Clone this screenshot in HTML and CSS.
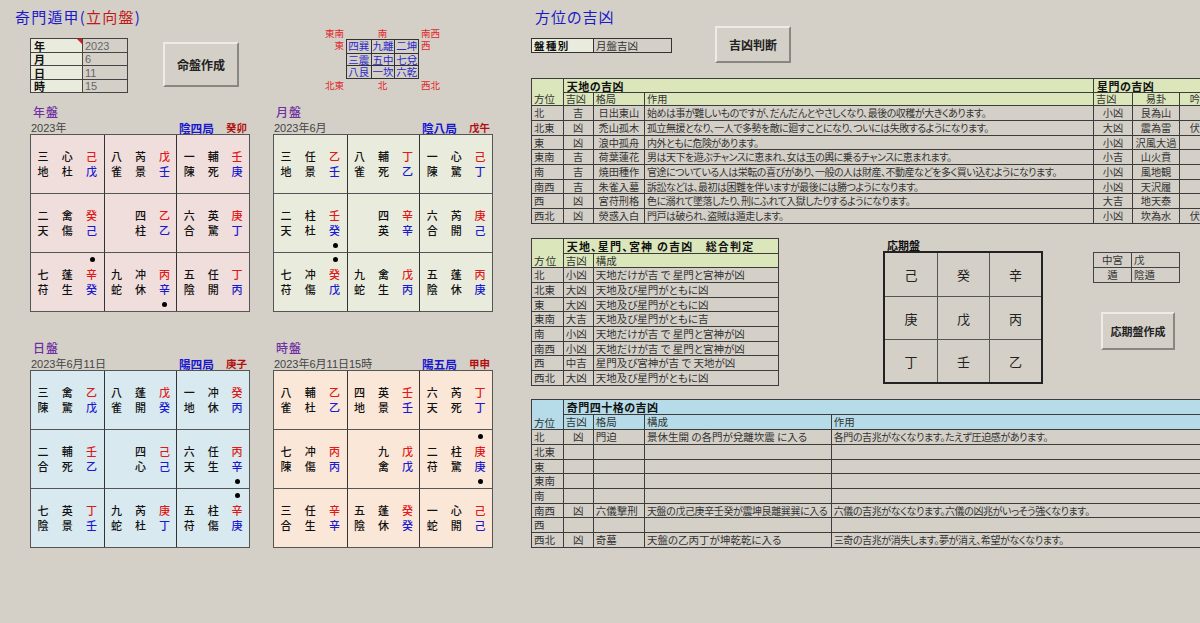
FILE: index.html
```html
<!DOCTYPE html>
<html lang="ja">
<head>
  <meta charset="UTF-8">
  <title>奇門遁甲(立向盤)</title>
  <link rel="stylesheet" href="styles.css">
</head>
<body>
<div class="page">

  <!-- left side: input and the four boards -->
  <div class="left">
    <div class="left-top">
      <div class="head">
        <h1 class="title">奇門遁甲(<span class="red">立向盤</span>)</h1>
        <div class="controls">
          <table class="input">
            <tr><th class="marked">年</th><td>2023</td></tr>
            <tr><th>月</th><td>6</td></tr>
            <tr><th>日</th><td>11</td></tr>
            <tr><th>時</th><td>15</td></tr>
          </table>
          <button class="btn btn-make">命盤作成</button>
        </div>
      </div>
      <div class="compass">
        <span class="dir dir-r">東南</span><span class="dir dir-c">南</span><span class="dir dir-l">南西</span>
        <span class="dir dir-r">東</span>
        <div class="palace">
          <span>四巽</span><span>九離</span><span>二坤</span>
          <span>三震</span><span>五中</span><span>七兌</span>
          <span>八艮</span><span>一坎</span><span>六乾</span>
        </div>
        <span class="dir dir-l">西</span>
        <span class="dir dir-r">北東</span><span class="dir dir-c">北</span><span class="dir dir-l">西北</span>
      </div>
    </div>

    <div class="boards">
      <section class="chart chart-year">
        <h2>年盤</h2>
        <div class="sub"><span>2023年</span><b class="ju">陰四局</b><b class="kan">癸卯</b></div>
        <div class="board">
          <div class="cell"><span>三</span><span>心</span><span class="r">己</span><span>地</span><span>杜</span><span class="b">戊</span></div>
          <div class="cell"><span>八</span><span>芮</span><span class="r">戊</span><span>雀</span><span>景</span><span class="b">壬</span></div>
          <div class="cell"><span>一</span><span>輔</span><span class="r">壬</span><span>陳</span><span>死</span><span class="b">庚</span></div>
          <div class="cell"><span>二</span><span>禽</span><span class="r">癸</span><span>天</span><span>傷</span><span class="b">己</span></div>
          <div class="cell"><span></span><span>四</span><span class="r">乙</span><span></span><span>柱</span><span class="b">乙</span></div>
          <div class="cell"><span>六</span><span>英</span><span class="r">庚</span><span>合</span><span>驚</span><span class="b">丁</span></div>
          <div class="cell"><i class="dot dot-top"></i><span>七</span><span>蓬</span><span class="r">辛</span><span>苻</span><span>生</span><span class="b">癸</span></div>
          <div class="cell"><span>九</span><span>冲</span><span class="r">丙</span><span>蛇</span><span>休</span><span class="b">辛</span><i class="dot dot-bottom"></i></div>
          <div class="cell"><span>五</span><span>任</span><span class="r">丁</span><span>陰</span><span>開</span><span class="b">丙</span></div>
        </div>
      </section>

      <section class="chart chart-month">
        <h2>月盤</h2>
        <div class="sub"><span>2023年6月</span><b class="ju">陰八局</b><b class="kan">戊午</b></div>
        <div class="board">
          <div class="cell"><span>三</span><span>任</span><span class="r">乙</span><span>地</span><span>景</span><span class="b">壬</span></div>
          <div class="cell"><span>八</span><span>輔</span><span class="r">丁</span><span>雀</span><span>死</span><span class="b">乙</span></div>
          <div class="cell"><span>一</span><span>心</span><span class="r">己</span><span>陳</span><span>驚</span><span class="b">丁</span></div>
          <div class="cell"><span>二</span><span>柱</span><span class="r">壬</span><span>天</span><span>杜</span><span class="b">癸</span><i class="dot dot-bottom"></i></div>
          <div class="cell"><span></span><span>四</span><span class="r">辛</span><span></span><span>英</span><span class="b">辛</span></div>
          <div class="cell"><span>六</span><span>芮</span><span class="r">庚</span><span>合</span><span>開</span><span class="b">己</span></div>
          <div class="cell"><i class="dot dot-top"></i><span>七</span><span>冲</span><span class="r">癸</span><span>苻</span><span>傷</span><span class="b">戊</span></div>
          <div class="cell"><span>九</span><span>禽</span><span class="r">戊</span><span>蛇</span><span>生</span><span class="b">丙</span></div>
          <div class="cell"><span>五</span><span>蓬</span><span class="r">丙</span><span>陰</span><span>休</span><span class="b">庚</span></div>
        </div>
      </section>

      <section class="chart chart-day">
        <h2>日盤</h2>
        <div class="sub"><span>2023年6月11日</span><b class="ju">陽四局</b><b class="kan">庚子</b></div>
        <div class="board">
          <div class="cell"><span>三</span><span>禽</span><span class="r">乙</span><span>陳</span><span>驚</span><span class="b">戊</span></div>
          <div class="cell"><span>八</span><span>蓬</span><span class="r">戊</span><span>雀</span><span>開</span><span class="b">癸</span></div>
          <div class="cell"><span>一</span><span>冲</span><span class="r">癸</span><span>地</span><span>休</span><span class="b">丙</span></div>
          <div class="cell"><span>二</span><span>輔</span><span class="r">壬</span><span>合</span><span>死</span><span class="b">乙</span></div>
          <div class="cell"><span></span><span>四</span><span class="r">己</span><span></span><span>心</span><span class="b">己</span></div>
          <div class="cell"><span>六</span><span>任</span><span class="r">丙</span><span>天</span><span>生</span><span class="b">辛</span><i class="dot dot-bottom"></i></div>
          <div class="cell"><span>七</span><span>英</span><span class="r">丁</span><span>陰</span><span>景</span><span class="b">壬</span></div>
          <div class="cell"><span>九</span><span>芮</span><span class="r">庚</span><span>蛇</span><span>杜</span><span class="b">丁</span></div>
          <div class="cell"><i class="dot dot-top"></i><span>五</span><span>柱</span><span class="r">辛</span><span>苻</span><span>傷</span><span class="b">庚</span></div>
        </div>
      </section>

      <section class="chart chart-hour">
        <h2>時盤</h2>
        <div class="sub"><span>2023年6月11日15時</span><b class="ju">陽五局</b><b class="kan">甲申</b></div>
        <div class="board">
          <div class="cell"><span>八</span><span>輔</span><span class="r">乙</span><span>雀</span><span>杜</span><span class="b">乙</span></div>
          <div class="cell"><span>四</span><span>英</span><span class="r">壬</span><span>地</span><span>景</span><span class="b">壬</span></div>
          <div class="cell"><span>六</span><span>芮</span><span class="r">丁</span><span>天</span><span>死</span><span class="b">丁</span></div>
          <div class="cell"><span>七</span><span>冲</span><span class="r">丙</span><span>陳</span><span>傷</span><span class="b">丙</span></div>
          <div class="cell"><span></span><span>九</span><span class="r">戊</span><span></span><span>禽</span><span class="b">戊</span></div>
          <div class="cell"><i class="dot dot-top"></i><span>二</span><span>柱</span><span class="r">庚</span><span>苻</span><span>驚</span><span class="b">庚</span><i class="dot dot-bottom"></i></div>
          <div class="cell"><span>三</span><span>任</span><span class="r">辛</span><span>合</span><span>生</span><span class="b">辛</span></div>
          <div class="cell"><span>五</span><span>蓬</span><span class="r">癸</span><span>陰</span><span>休</span><span class="b">癸</span></div>
          <div class="cell"><span>一</span><span>心</span><span class="r">己</span><span>蛇</span><span>開</span><span class="b">己</span></div>
        </div>
      </section>
    </div>
  </div>

  <!-- right side: direction tables -->
  <div class="right">
    <div class="right-top">
      <div class="right-head">
        <h1 class="title title-right">方位の吉凶</h1>
        <table class="kind">
          <tr><th>盤種別</th><td>月盤吉凶</td></tr>
        </table>
      </div>
      <button class="btn btn-judge">吉凶判断</button>
    </div>

    <table class="sheet sheet-a">
      <colgroup><col class="c-dir"><col class="c-luck"><col class="c-name"><col class="c-effect"><col class="c-luck2"><col class="c-gua"><col class="c-gin"></colgroup>
      <tr class="hd1"><th rowspan="2" class="dir-head">方位</th><th colspan="3">天地の吉凶</th><th colspan="3">星門の吉凶</th></tr>
      <tr class="hd2"><td>吉凶</td><td>格局</td><td>作用</td><td>吉凶</td><td class="ctr">易卦</td><td class="ctr">吟剋</td></tr>
      <tr><td>北</td><td class="ctr">吉</td><td class="ctr">日出東山</td><td class="tight">始めは事が難しいものですが、だんだんとやさしくなり、最後の収穫が大きくあります。</td><td class="ctr">小凶</td><td class="ctr">艮為山</td><td></td></tr>
      <tr><td>北東</td><td class="ctr">凶</td><td class="ctr">禿山孤木</td><td class="tight">孤立無援となり、一人で多勢を敵に廻すことになり、ついには失敗するようになります。</td><td class="ctr">大凶</td><td class="ctr">震為雷</td><td class="ctr">伏吟</td></tr>
      <tr><td>東</td><td class="ctr">凶</td><td class="ctr">浪中孤舟</td><td class="tight">内外ともに危険があります。</td><td class="ctr">小凶</td><td class="ctr">沢風大過</td><td></td></tr>
      <tr><td>東南</td><td class="ctr">吉</td><td class="ctr">荷葉蓮花</td><td class="tight">男は天下を遊ぶチャンスに恵まれ、女は玉の輿に乗るチャンスに恵まれます。</td><td class="ctr">小吉</td><td class="ctr">山火賁</td><td></td></tr>
      <tr><td>南</td><td class="ctr">吉</td><td class="ctr">焼田種作</td><td class="tight">官途についている人は栄転の喜びがあり、一般の人は財産、不動産などを多く買い込むようになります。</td><td class="ctr">小凶</td><td class="ctr">風地観</td><td></td></tr>
      <tr><td>南西</td><td class="ctr">吉</td><td class="ctr">朱雀入墓</td><td class="tight">訴訟などは、最初は困難を伴いますが最後には勝つようになります。</td><td class="ctr">小凶</td><td class="ctr">天沢履</td><td></td></tr>
      <tr><td>西</td><td class="ctr">凶</td><td class="ctr">宮苻刑格</td><td class="tight">色に溺れて墜落したり、刑にふれて入獄したりするようになります。</td><td class="ctr">大吉</td><td class="ctr">地天泰</td><td></td></tr>
      <tr><td>西北</td><td class="ctr">凶</td><td class="ctr">熒惑入白</td><td class="tight">門戸は破られ、盗賊は遁走します。</td><td class="ctr">小凶</td><td class="ctr">坎為水</td><td class="ctr">伏吟</td></tr>
    </table>

    <div class="middle">
      <table class="sheet sheet-b">
        <colgroup><col class="c-dir"><col class="c-luck"><col class="c-make"></colgroup>
        <tr class="hd1"><th rowspan="2" class="dir-head">方位</th><th colspan="2">天地、星門、宮神 の吉凶&emsp;総合判定</th></tr>
        <tr class="hd2"><td>吉凶</td><td>構成</td></tr>
        <tr><td>北</td><td>小凶</td><td>天地だけが吉 で 星門と宮神が凶</td></tr>
        <tr><td>北東</td><td>大凶</td><td>天地及び星門がともに凶</td></tr>
        <tr><td>東</td><td>大凶</td><td>天地及び星門がともに凶</td></tr>
        <tr><td>東南</td><td>大吉</td><td>天地及び星門がともに吉</td></tr>
        <tr><td>南</td><td>小凶</td><td>天地だけが吉 で 星門と宮神が凶</td></tr>
        <tr><td>南西</td><td>小凶</td><td>天地だけが吉 で 星門と宮神が凶</td></tr>
        <tr><td>西</td><td>中吉</td><td>星門及び宮神が吉 で 天地が凶</td></tr>
        <tr><td>西北</td><td>大凶</td><td>天地及び星門がともに凶</td></tr>
      </table>

      <div class="period">
        <div class="period-label">応期盤</div>
        <div class="period-board">
          <span>己</span><span>癸</span><span>辛</span>
          <span>庚</span><span>戊</span><span>丙</span>
          <span>丁</span><span>壬</span><span>乙</span>
        </div>
      </div>

      <div class="side">
        <table class="mini">
          <tr><td class="ctr">中宮</td><td>戊</td></tr>
          <tr><td class="ctr">遁</td><td>陰遁</td></tr>
        </table>
        <button class="btn btn-period">応期盤作成</button>
      </div>
    </div>

    <table class="sheet sheet-c">
      <colgroup><col class="c-dir"><col class="c-luck"><col class="c-name"><col class="c-make2"><col class="c-effect2"></colgroup>
      <tr class="hd1"><th rowspan="2" class="dir-head">方位</th><th colspan="4">奇門四十格の吉凶</th></tr>
      <tr class="hd2"><td>吉凶</td><td>格局</td><td>構成</td><td>作用</td></tr>
      <tr><td>北</td><td class="ctr">凶</td><td>門迫</td><td>景休生開 の各門が兌離坎震 に入る</td><td class="tight">各門の吉兆がなくなります。たえず圧迫感があります。</td></tr>
      <tr><td>北東</td><td></td><td></td><td></td><td></td></tr>
      <tr><td>東</td><td></td><td></td><td></td><td></td></tr>
      <tr><td>東南</td><td></td><td></td><td></td><td></td></tr>
      <tr><td>南</td><td></td><td></td><td></td><td></td></tr>
      <tr><td>南西</td><td class="ctr">凶</td><td>六儀撃刑</td><td class="tight">天盤の戊己庚辛壬癸が震坤艮離巽巽に入る</td><td class="tight">六儀の吉兆がなくなります。六儀の凶兆がいっそう強くなります。</td></tr>
      <tr><td>西</td><td></td><td></td><td></td><td></td></tr>
      <tr><td>西北</td><td class="ctr">凶</td><td>奇墓</td><td>天盤の乙丙丁が坤乾乾に入る</td><td class="tight">三奇の吉兆が消失します。夢が消え、希望がなくなります。</td></tr>
    </table>
  </div>

</div>
</body>
</html>
```

FILE: styles.css
```css
html, body {
  margin: 0;
  height: 100%;
  overflow: hidden;
}

body {
  background-color: #d4d0c8;
  color: #333;
  font-family: "Noto Sans CJK JP", "Liberation Sans", sans-serif;
  font-size: 10.5px;
  font-feature-settings: "palt";
}

.page {
  display: flex;
  width: 1260px;
}

table {
  border-collapse: collapse;
  table-layout: fixed;
}

th, td {
  padding: 0 0 0 2px;
  white-space: nowrap;
  overflow: hidden;
  line-height: 12px;
}

.ctr {
  text-align: center;
  padding-left: 0;
}

.red {
  color: #c01818;
}

/* titles */
.title {
  margin: 0;
  color: #1a1ac8;
  font-size: 15px;
  font-weight: 400;
  line-height: 18px;
  letter-spacing: 1.2px;
}

/* buttons */
.btn {
  display: block;
  padding: 0;
  font-family: inherit;
  font-weight: 700;
  color: #222;
  background-color: #d4d0c8;
  border: 2px solid;
  border-color: #eeece6 #8a8780 #8a8780 #eeece6;
}

.btn-make {
  width: 76px;
  height: 45px;
  margin: 4px 0 0 35px;
  font-size: 12px;
}

.btn-judge {
  width: 76px;
  height: 37px;
  margin-top: 26px;
  font-size: 12px;
}

.btn-period {
  width: 74px;
  height: 38px;
  margin: 29px 0 0 8px;
  font-size: 11px;
}

/* left */
.left {
  width: 531px;
  flex: none;
}

.left-top {
  display: flex;
  height: 103px;
}

.head {
  width: 323px;
}

.head .title {
  padding: 8px 0 0 15px;
  height: 38px;
  box-sizing: border-box;
}

.controls {
  display: flex;
  align-items: flex-start;
  padding-left: 30px;
}

.input {
  width: 98px;
  border: 1px solid #333;
}

.input tr {
  height: 14px;
}

.input tr:nth-child(even) {
  height: 13px;
}

.input th, .input td {
  border: 1px solid #444;
  font-size: 11px;
}

.input th {
  width: 48px;
  padding-left: 3px;
  text-align: left;
  color: #111;
  background-color: #e9ecdd;
  position: relative;
}

.input td {
  color: #666;
  font-family: "Liberation Sans", sans-serif;
}

.marked::after {
  content: "";
  position: absolute;
  top: 0;
  right: 0;
  border-top: 5px solid #e01818;
  border-left: 5px solid transparent;
}

/* compass */
.compass {
  display: grid;
  grid-template-columns: 23px 73px 23px;
  grid-template-rows: 12px 40px 12px;
  margin-top: 27px;
  height: 64px;
  color: #e02828;
  font-size: 9.5px;
  line-height: 12px;
}

.dir-r {
  text-align: right;
  padding-right: 2px;
}

.dir-c {
  text-align: center;
}

.dir-l {
  padding-left: 2px;
}

.palace {
  display: grid;
  grid-template-columns: repeat(3, 1fr);
  grid-template-rows: repeat(3, 1fr);
  border: 1px solid #333;
  color: #2a2ac8;
  font-size: 10.5px;
  line-height: 11px;
}

.palace span {
  text-align: center;
  border-left: 1px solid #333;
  border-top: 1px solid #333;
}

.palace span:nth-child(3n+1) {
  border-left: 0;
}

.palace span:nth-child(-n+3) {
  border-top: 0;
}

/* boards */
.boards {
  display: grid;
  grid-template-columns: 220px 220px;
  column-gap: 23px;
  row-gap: 27px;
  padding-left: 30px;
}

.chart h2 {
  margin: 0;
  padding-left: 3px;
  height: 18px;
  color: #7030a0;
  font-size: 12px;
  font-weight: 500;
  line-height: 18px;
  letter-spacing: 1px;
}

.sub {
  display: flex;
  height: 13px;
  padding: 0 3px 0 1px;
  color: #444;
  font-size: 10.5px;
  line-height: 13px;
}

.sub span {
  flex: 1;
  font-family: "Liberation Sans", "Noto Sans CJK JP", sans-serif;
  font-size: 11px;
  line-height: 15px;
}

.ju {
  color: #1818d0;
  font-size: 11.7px;
}

.kan {
  margin-left: 12px;
  color: #b01010;
  font-size: 10.5px;
}

.board {
  display: grid;
  grid-template-columns: repeat(3, 1fr);
  grid-template-rows: 58px 59px 59px;
  width: 220px;
  box-sizing: border-box;
  border: 1px solid #555;
}

.chart-year .board { background-color: #f0dedc; }
.chart-month .board { background-color: #e9ecdd; }
.chart-day .board { background-color: #d9e9f0; }
.chart-hour .board { background-color: #fbe7d8; }

.cell {
  position: relative;
  display: grid;
  grid-template-columns: repeat(3, 1fr);
  grid-template-rows: 15px 15px;
  align-content: center;
  border-left: 1px solid #333;
  border-top: 1px solid #555;
  color: #111;
  font-size: 11px;
  font-weight: 500;
  text-align: center;
  line-height: 15px;
}

.cell:nth-child(3n+1) {
  border-left: 0;
}

.cell:nth-child(-n+3) {
  border-top: 0;
}

.cell .r {
  color: #e01818;
}

.cell .b {
  color: #1a1ad0;
}

.dot {
  position: absolute;
  right: 9px;
  width: 5px;
  height: 5px;
  border-radius: 50%;
  background-color: #000;
}

.dot-top {
  top: 4px;
}

.dot-bottom {
  bottom: 4px;
}

/* right */
.right {
  flex: none;
  width: 729px;
}

.right-top {
  display: flex;
  height: 78px;
}

.right-head {
  width: 184px;
}

.title-right {
  padding: 8px 0 0 4px;
  height: 38px;
  box-sizing: border-box;
  letter-spacing: 1px;
}

.kind {
  width: 141px;
}

.kind tr {
  height: 14px;
}

.kind th, .kind td {
  border: 1px solid #333;
}

.kind th {
  width: 59px;
  text-align: left;
  color: #111;
  background-color: #e9ecdd;
  letter-spacing: 1.4px;
}

.sheet tr {
  height: 15px;
}

.sheet tr:nth-child(3n+2) {
  height: 14px;
}

.sheet th, .sheet td {
  border: 1px solid #3c3c3c;
}

.sheet-a {
  width: 689px;
  font-size: 10.2px;
}

.sheet-a tr.hd1 {
  height: 14px;
}

.sheet-a tr.hd2 {
  height: 13px;
}

.sheet-c tr.hd2 {
  height: 15px;
}

.hd1 th {
  text-align: left;
  color: #111;
  font-size: 11px;
  padding-left: 3px;
  letter-spacing: .5px;
}

.sheet-b .hd1 th {
  letter-spacing: 1.2px;
}

.sheet .dir-head {
  vertical-align: bottom;
  font-weight: 400;
  color: #333;
  font-size: 10.5px;
  padding-left: 2px;
  letter-spacing: 0;
}

.sheet-a .hd1 th, .sheet-a .hd2 td,
.sheet-b .hd1 th, .sheet-b .hd2 td {
  background-color: #dbe6bb;
}

.sheet-c .hd1 th, .sheet-c .hd2 td {
  background-color: #b5dce8;
}

.tight {
  font-size: 10px;
  letter-spacing: -.4px;
}

.sheet-a .tight {
  letter-spacing: -.5px;
}

.c-dir { width: 31.7px; }
.c-luck { width: 30px; }
.c-name { width: 51.3px; }
.c-effect { width: 449px; }
.c-luck2 { width: 39px; }
.c-gua { width: 47px; }
.c-gin { width: 41px; }
.c-make { width: 185.3px; }
.c-make2 { width: 186.7px; }
.c-effect2 { width: 430px; }

.middle {
  display: flex;
  align-items: flex-start;
  margin-top: 14px;
}

.sheet-b {
  width: 247px;
}

.period {
  width: 160px;
  margin-left: 104px;
  margin-top: 1px;
}

.period-label {
  height: 12px;
  padding-left: 4px;
  color: #111;
  font-size: 11px;
  font-weight: 700;
  line-height: 12px;
}

.period-board {
  display: grid;
  grid-template-columns: repeat(3, 1fr);
  grid-template-rows: repeat(3, 1fr);
  height: 133px;
  box-sizing: border-box;
  border: 2px solid #222;
  color: #222;
  font-size: 13px;
}

.period-board span {
  display: flex;
  align-items: center;
  justify-content: center;
  border-left: 1px solid #555;
  border-top: 1px solid #555;
}

.period-board span:nth-child(3n+1) {
  border-left: 0;
}

.period-board span:nth-child(-n+3) {
  border-top: 0;
}

.side {
  margin-left: 50px;
  margin-top: 14px;
}

.mini {
  width: 87px;
}

.mini tr {
  height: 15px;
}

.mini td {
  border: 1px solid #444;
}

.mini td:first-child {
  width: 37px;
}

.sheet-c {
  width: 729px;
  margin-top: 13px;
}
```
